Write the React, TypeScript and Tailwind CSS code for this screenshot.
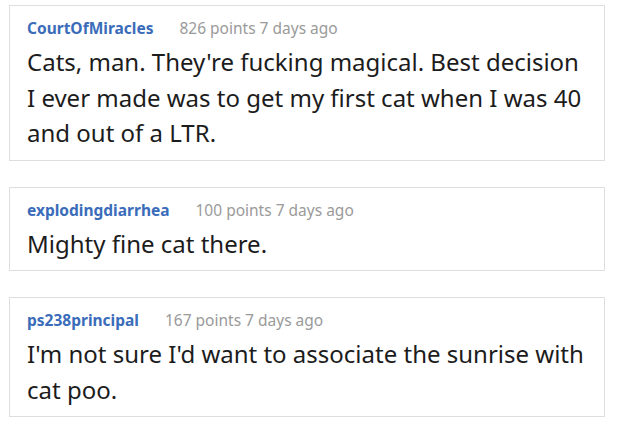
import React from "react";

const comments = [
  {
    user: "CourtOfMiracles",
    meta: "826 points 7 days ago",
    body: "Cats, man. They're fucking magical. Best decision I ever made was to get my first cat when I was 40 and out of a LTR.",
  },
  {
    user: "explodingdiarrhea",
    meta: "100 points 7 days ago",
    body: "Mighty fine cat there.",
  },
  {
    user: "ps238principal",
    meta: "167 points 7 days ago",
    body: "I'm not sure I'd want to associate the sunrise with cat poo.",
  },
];

export default function App() {
  return (
    <div
      className="w-[620px] h-[431px] bg-white overflow-hidden pt-[5px] pl-[9px]"
      style={{ fontFamily: '"Noto Sans", "Open Sans", sans-serif' }}
    >
      <div className="flex flex-col gap-[26px] w-[596px]">
        {comments.map((c) => (
          <div
            key={c.user}
            className="border border-[#dedede] pt-[11px] pb-[9px] pl-[17px] pr-[18px]"
          >
            <div className="flex items-center h-[24px] gap-[26px]">
              <span className="text-[15.5px] font-bold text-[#3a6cba]">{c.user}</span>
              <span className="text-[15.5px] text-[#9a9a9a]">{c.meta}</span>
            </div>
            <div className="mt-[3px] text-[24px] leading-[35.5px] text-[#1c1c1c]">{c.body}</div>
          </div>
        ))}
      </div>
    </div>
  );
}
